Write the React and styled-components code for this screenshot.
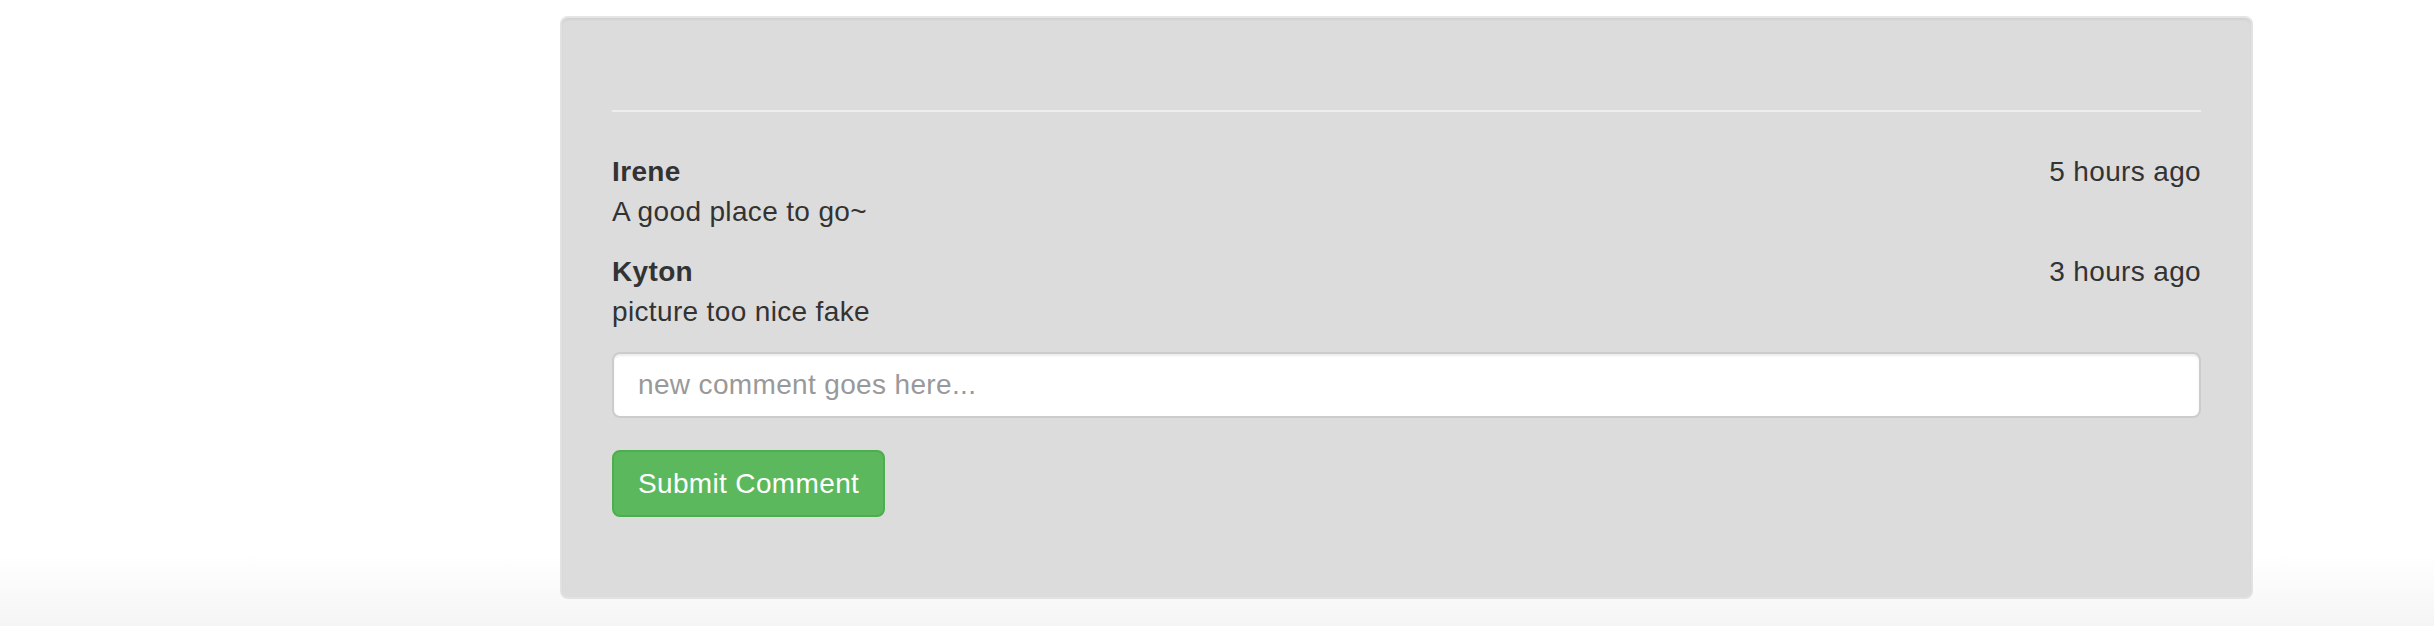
import React, { useState } from "react";
import styled, { createGlobalStyle } from "styled-components";

const GlobalStyle = createGlobalStyle`
html, body {
  margin: 0;
  padding: 0;
}
body {
  min-height: 626px;
  background: linear-gradient(to bottom, #ffffff 0px, #ffffff 555px, #f5f5f5 626px);
  font-family: "Liberation Sans", Arial, Helvetica, sans-serif;
  color: #333;
  letter-spacing: 0.35px;
}
`;

const Page = styled.div`
  padding: 16px 0 0 560px;
`;

const Well = styled.div`
  box-sizing: border-box;
  width: 1693px;
  height: 583px;
  padding: 92px 50px 0 50px;
  background: #dcdcdc;
  border: 2px solid #e2e2e2;
  border-top-color: #e4e4e4;
  border-radius: 8px;
  box-shadow: inset 0 2px 2px rgba(0, 0, 0, 0.05);
`;

const Rule = styled.hr`
  margin: 0 0 40px 0;
  border: 0;
  border-top: 2px solid #eeeeee;
  height: 0;
`;

const Comment = styled.div`
  margin-bottom: 20px;
  font-size: 28px;
  line-height: 40px;
`;

const Head = styled.div`
  display: flex;
  justify-content: space-between;
`;

const Author = styled.strong`
  font-weight: 700;
`;

const Time = styled.span`
  color: #333;
`;

const Body = styled.p`
  margin: 0;
`;

const Input = styled.input`
  display: block;
  box-sizing: border-box;
  width: 100%;
  height: 66px;
  margin: 0 0 32px 0;
  padding: 0 24px;
  font-family: inherit;
  font-size: 28px;
  letter-spacing: inherit;
  color: #555;
  background: #fff;
  border: 2px solid #cccccc;
  border-radius: 8px;
  box-shadow: inset 0 2px 2px rgba(0, 0, 0, 0.075);
  outline: none;
  &::placeholder {
    color: #999;
  }
`;

const Button = styled.button`
  display: block;
  height: 67px;
  padding: 0 24px;
  font-family: inherit;
  font-size: 28px;
  letter-spacing: inherit;
  color: #fff;
  background: #5cb85c;
  border: 2px solid #4cae4c;
  border-radius: 8px;
  cursor: pointer;
`;

const comments = [
  { author: "Irene", time: "5 hours ago", text: "A good place to go~" },
  { author: "Kyton", time: "3 hours ago", text: "picture too nice fake" },
];

export default function App() {
  const [text, setText] = useState("");
  return (
    <>
      <GlobalStyle />
      <Page>
        <Well>
          <Rule />
          {comments.map((c) => (
            <Comment key={c.author}>
              <Head>
                <Author>{c.author}</Author>
                <Time>{c.time}</Time>
              </Head>
              <Body>{c.text}</Body>
            </Comment>
          ))}
          <Input
            placeholder="new comment goes here..."
            value={text}
            onChange={(e) => setText(e.target.value)}
          />
          <Button>Submit Comment</Button>
        </Well>
      </Page>
    </>
  );
}
